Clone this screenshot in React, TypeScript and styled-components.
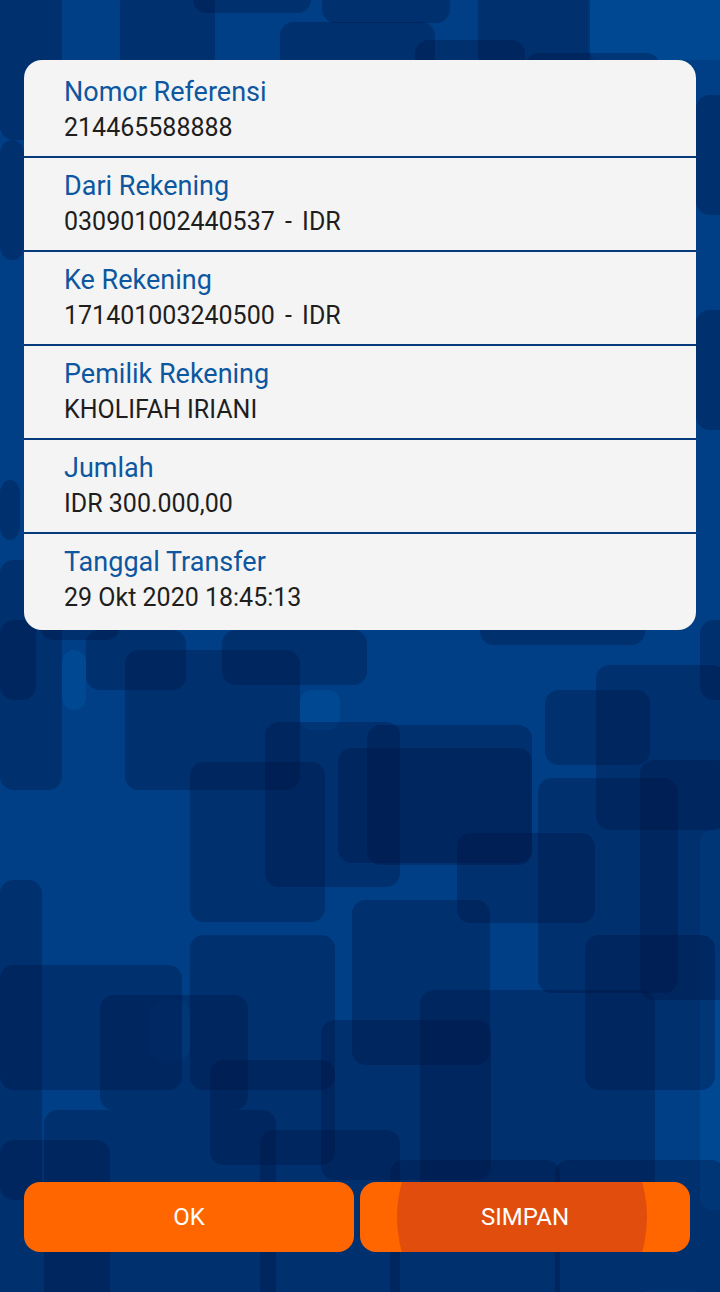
import React from "react";
import styled, { createGlobalStyle } from "styled-components";

const GlobalStyle = createGlobalStyle`
  html, body { margin: 0; padding: 0; }
  body { font-family: Roboto, "Liberation Sans", sans-serif; background: #003d82; }
  * { box-sizing: border-box; }
`;

const Page = styled.div`
  position: relative;
  width: 720px;
  height: 1292px;
  overflow: hidden;
  background: #003f85;
  display: flex;
  flex-direction: column;
  padding: 60px 0 40px 0;
`;

const Backdrop = styled.svg`
  position: absolute;
  inset: 0;
  width: 720px;
  height: 1292px;
  z-index: 0;
`;

const Card = styled.div`
  position: relative;
  z-index: 1;
  margin: 0 24px;
  background: #f4f4f4;
  border-radius: 18px;
  padding: 4px 0;
  display: flex;
  flex-direction: column;
`;

const Row = styled.div`
  height: 92px;
  padding-left: 40px;
  display: flex;
  flex-direction: column;
  justify-content: center;
  & + & {
    border-top: 2px solid #073a7b;
    height: 94px;
  }
`;

const Label = styled.div`
  font-size: 27px;
  line-height: 36px;
  color: #0d57a0;
`;

const Value = styled.div`
  font-size: 25px;
  line-height: 36px;
  color: #1e1e1e;
`;

const Sep = styled.span`
  margin: 0 4px;
`;

const Actions = styled.div`
  position: relative;
  z-index: 1;
  margin-top: auto;
  padding: 0 30px 0 24px;
  display: flex;
  gap: 6px;
`;

const Button = styled.button`
  position: relative;
  overflow: hidden;
  flex: 1;
  height: 70px;
  border: none;
  border-radius: 16px;
  background: #ff6600;
  color: #ffffff;
  font-family: Roboto, "Liberation Sans", sans-serif;
  font-size: 24px;
  font-weight: 400;
  display: flex;
  align-items: center;
  justify-content: center;
  padding: 0;
`;

const Ripple = styled.span`
  position: absolute;
  width: 250px;
  height: 250px;
  left: 37px;
  top: -90px;
  border-radius: 50%;
  background: #e04d0c;
`;

const ButtonText = styled.span`
  position: relative;
`;

const darkRects: [number, number, number, number][] = [
  [0, -10, 62, 150], [120, -10, 95, 80], [193, -20, 118, 33], [322, -20, 128, 43],
  [280, 22, 155, 60], [415, 40, 110, 30], [478, -10, 112, 80], [525, 53, 135, 30],
  [696, 95, 40, 120], [696, 310, 40, 120], [0, 140, 24, 120], [0, 480, 20, 60],
  [0, 560, 36, 140], [0, 620, 62, 170], [86, 630, 100, 60], [125, 650, 175, 140],
  [222, 630, 145, 55], [190, 762, 135, 160], [265, 722, 135, 165], [338, 748, 194, 115],
  [367, 725, 165, 140], [457, 833, 138, 90], [538, 778, 140, 215], [545, 690, 105, 75],
  [596, 665, 130, 165], [640, 760, 90, 240], [352, 900, 138, 165], [190, 935, 145, 155],
  [0, 965, 182, 125], [0, 880, 42, 320], [100, 995, 148, 115], [210, 1060, 125, 105],
  [420, 990, 235, 230], [585, 935, 130, 155], [321, 1020, 170, 160], [0, 1140, 110, 170],
  [555, 1160, 170, 150], [44, 1110, 232, 200], [260, 1130, 140, 180], [390, 1160, 170, 150],
  [700, 620, 40, 80], [480, 600, 165, 45], [40, 600, 80, 40],
];

const lightRects: [number, number, number, number][] = [
  [588, -10, 140, 70], [300, 690, 40, 40], [700, 830, 30, 380], [62, 650, 24, 60],
  [150, 1000, 40, 60], [640, 1290, 60, 10], [520, 540, 60, 40],
];

type RowData = { label: string; value: string; suffix?: string };

const rows: RowData[] = [
  { label: "Nomor Referensi", value: "214465588888" },
  { label: "Dari Rekening", value: "030901002440537", suffix: "IDR" },
  { label: "Ke Rekening", value: "171401003240500", suffix: "IDR" },
  { label: "Pemilik Rekening", value: "KHOLIFAH IRIANI" },
  { label: "Jumlah", value: "IDR 300.000,00" },
  { label: "Tanggal Transfer", value: "29 Okt 2020 18:45:13" },
];

export default function App() {
  return (
    <>
      <GlobalStyle />
      <Page>
        <Backdrop viewBox="0 0 720 1292" aria-hidden="true">
          {lightRects.map(([x, y, w, h], i) => (
            <rect key={"l" + i} x={x} y={y} width={w} height={h} rx={12} fill="#0058a8" opacity={0.35} />
          ))}
          {darkRects.map(([x, y, w, h], i) => (
            <rect key={"d" + i} x={x} y={y} width={w} height={h} rx={14} fill="#001446" opacity={0.35} />
          ))}
        </Backdrop>
        <Card>
          {rows.map((r) => (
            <Row key={r.label}>
              <Label>{r.label}</Label>
              <Value>
                {r.value}
                {r.suffix ? (
                  <>
                    {" "}
                    <Sep>-</Sep> {r.suffix}
                  </>
                ) : null}
              </Value>
            </Row>
          ))}
        </Card>
        <Actions>
          <Button>
            <ButtonText>OK</ButtonText>
          </Button>
          <Button>
            <Ripple />
            <ButtonText>SIMPAN</ButtonText>
          </Button>
        </Actions>
      </Page>
    </>
  );
}
